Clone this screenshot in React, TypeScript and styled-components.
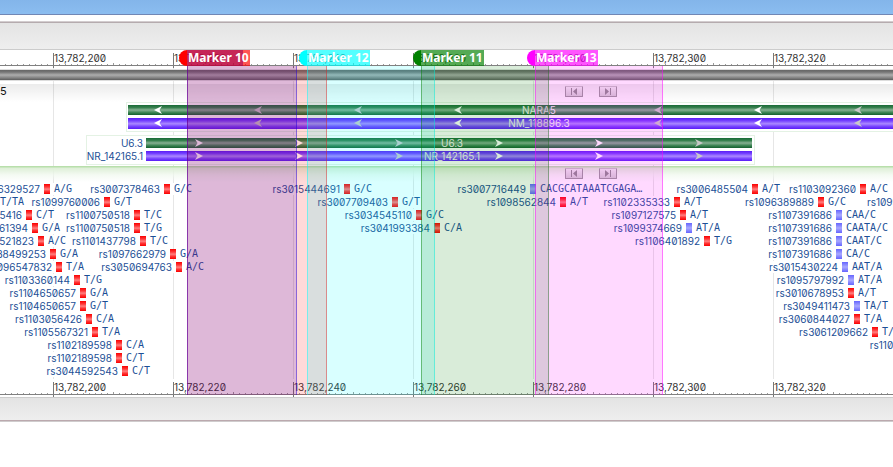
import React from "react";
import styled, { createGlobalStyle } from "styled-components";

const BASE_WIDTH = 6;
const FIRST_BASE = 200;
const ORIGIN = 50;

/** Left edge in pixels of a base, counted from 13,782,000. */
const baseLeft = (base: number) => ORIGIN + (base - FIRST_BASE) * BASE_WIDTH;

const GlobalStyle = createGlobalStyle`
  * { box-sizing: border-box; }
  body {
    margin: 0;
    background: #fff;
    overflow: hidden;
    font-family: Inter, "Noto Sans", sans-serif;
    font-size: 10px;
    font-feature-settings: "zero" 1;
  }
`;

const TitleBar = styled.header`
  height: 15px;
  margin-bottom: 6px;
  background: linear-gradient(#83b5ea, #8bbdf0);
  border-bottom: 1px solid #7187b5;
`;

const Panel = styled.main`
  border-top: 1px solid #d3cdcf;
  border-bottom: 1px solid #cfcccd;
`;

const Toolbar = styled.div`
  height: 28px;
  border-top: 1px solid #b5abae;
  border-bottom: 1px solid #ccc;
  background: linear-gradient(#e4e4e4, #eee);
`;

const StatusBar = styled.footer`
  height: 24px;
  border-top: 1px solid #ccc;
  border-bottom: 1px solid #bba9ae;
  background: linear-gradient(#e3e3e3, #eee);
`;

const Viewer = styled.section`
  position: relative;
  overflow: hidden;
`;

const Ruler = styled.div`
  display: flex;
  height: 18px;
  padding: 1px 0 0 53px;
  background:
    linear-gradient(#808080, #808080) 0 15px / 100% 1px no-repeat,
    linear-gradient(90deg, #777 1px, transparent 1px) 53px 3px / 120px 15px repeat-x,
    linear-gradient(90deg, #999 1px, transparent 1px) 53px 13px / 60px 2px repeat-x,
    linear-gradient(90deg, #999 1px, transparent 1px) 53px 14px / 6px 1px repeat-x,
    #fff;
`;

const RulerLabel = styled.span`
  flex: 0 0 120px;
  padding-left: 1px;
  line-height: 14px;
  color: #333;
  white-space: nowrap;
`;

const Tracks = styled.div`
  background: linear-gradient(90deg, #e6e6e6 1px, transparent 1px) 53px 0 / 120px 100% repeat-x;
`;

const SequenceTrack = styled.div`
  padding: 1px 0 3px;
`;

const SequenceBar = styled.div`
  height: 12px;
  border-top: 1px solid #ddd;
  border-bottom: 1px solid #ddd;
  background: linear-gradient(#666, #747474 20%, #adadad 50%, #808080 80%, #5c5c5c);
`;

const TrackHeader = styled.div<{ $kind: "gene" | "snp" }>`
  display: flex;
  align-items: flex-start;
  height: ${(p) => (p.$kind === "gene" ? 18 : 16)}px;
  padding-top: 2px;
  background: ${(p) =>
    p.$kind === "gene"
      ? "linear-gradient(rgba(0,0,0,.08), rgba(0,0,0,0))"
      : "linear-gradient(#b8dfab 1px, #deefd7 2px, rgba(240,248,238,.7) 9px, rgba(255,255,255,0))"};
`;

const TrackName = styled.span`
  flex: 0 0 565px;
  font-size: 11px;
  line-height: 10px;
  color: #111;
`;

const NavButtons = styled.div`
  display: flex;
  gap: 16px;
`;

const NavButton = styled.button`
  display: flex;
  align-items: center;
  justify-content: center;
  width: 18px;
  height: 11px;
  padding: 0;
  border: 1px solid #999;
  border-top-color: #c4c4c4;
  border-radius: 1px;
  background: linear-gradient(#eee, #d2d2d2);
`;

const GeneGroup = styled.div<{ $left: number; $width?: number; $gap: number }>`
  width: ${(p) => (p.$width ? `${p.$width}px` : "auto")};
  margin-left: ${(p) => p.$left}px;
  margin-bottom: ${(p) => p.$gap}px;
  padding: 2px 0 0 1px;
  border: 1px solid #e4f2e4;
  border-right-width: ${(p) => (p.$width ? 1 : 0)}px;
  background: #fff;
`;

const GeneRow = styled.div`
  display: flex;
  align-items: flex-start;
  height: 13px;
`;

const GeneName = styled.span`
  display: flex;
  justify-content: flex-end;
  width: 55px;
  margin-right: 3px;
  line-height: 10px;
  white-space: nowrap;
  color: #1c4f96;
`;

const GeneBar = styled.div<{ $kind: "gene" | "rna"; $open?: boolean }>`
  position: relative;
  flex: 1;
  height: ${(p) => (p.$kind === "rna" && p.$open ? 11 : 10)}px;
  margin-right: ${(p) => (p.$open ? 0 : 2)}px;
  overflow: hidden;
  background: ${(p) =>
    p.$kind === "gene"
      ? "linear-gradient(#186b36, #35804d 25%, #86b092 50%, #35804d 78%, #14602f)"
      : "linear-gradient(#5a1cf5, #7440ff 25%, #aa88ff 52%, #7440ff 78%, #5a1cf5)"};
`;

const BarText = styled.span<{ $center: number }>`
  position: absolute;
  top: 0;
  left: ${(p) => p.$center}px;
  line-height: 11px;
  transform: translateX(-50%);
  white-space: nowrap;
  color: #f2f2f2;
`;

const ArrowRow = styled.div<{ $start: number }>`
  display: flex;
  gap: 92px;
  padding: 1px 0 0 ${(p) => p.$start}px;
`;

const ArrowIcon = styled.svg<{ $tone: "bright" | "dim" | "none" }>`
  flex: 0 0 8px;
  height: 8px;
  fill: ${(p) => (p.$tone === "dim" ? "#c8c8c8" : "#fff")};
  visibility: ${(p) => (p.$tone === "none" ? "hidden" : "visible")};
`;

const SnpList = styled.ul`
  margin: 0;
  padding: 0 0 2px;
  list-style: none;
`;

const SnpRow = styled.li`
  position: relative;
  height: 13px;
`;

const Snp = styled.div<{ $base: number }>`
  position: absolute;
  left: ${(p) => baseLeft(p.$base)}px;
  display: flex;
  align-items: center;
  height: 13px;
  line-height: 12px;
  white-space: nowrap;
  color: #1c4f96;
`;

const SnpName = styled.span`
  position: absolute;
  right: 100%;
  padding-right: 4px;
  background: #fff;
`;

const SnpMark = styled.span<{ $indel: boolean }>`
  width: 6px;
  height: 10px;
  background: ${(p) =>
    p.$indel
      ? "linear-gradient(#6565ff, #a9a9ff 50%, #6565ff)"
      : "linear-gradient(#fa0000, #ff3838 30%, #ff8080 52%, #ff3030 75%, #fa0000)"};
`;

const Allele = styled.span`
  padding-left: 4px;
  background: #fff;
  font-family: "DejaVu Sans Mono", monospace;
`;

const MarkerRange = styled.div<{ $left: number; $width: number; $rgb: string }>`
  position: absolute;
  top: 16px;
  bottom: 2px;
  left: ${(p) => p.$left}px;
  width: ${(p) => p.$width}px;
  border: solid rgba(${(p) => p.$rgb}, 0.45);
  border-width: 0 1px;
  background: rgba(${(p) => p.$rgb}, 0.15);
  pointer-events: none;
`;

const MarkerFlag = styled.div<{ $left: number; $rgb: string; $shaded: boolean }>`
  position: absolute;
  top: 0;
  left: ${(p) => p.$left}px;
  width: 63px;
  height: 16px;
  padding-left: 1px;
  background:
    ${(p) => (p.$shaded ? "linear-gradient(rgba(150, 0, 90, .55), rgba(150, 0, 90, .55)) 0 0 / 56px 100% no-repeat," : "")}
    rgba(${(p) => p.$rgb}, 0.67);
  font: bold 12px/16px "Noto Sans", sans-serif;
  white-space: nowrap;
  color: #fff;

  &::before {
    content: "";
    position: absolute;
    top: 0;
    right: 100%;
    width: 8px;
    height: 16px;
    border-radius: 8px 0 0 8px;
    background: rgb(${(p) => p.$rgb});
  }
`;

type SnpData = [name: string, base: number, allele: string, indel?: boolean];

const SNP_ROWS: SnpData[][] = [
  [["rs1096329527", 199, "A/G"], ["rs3007378463", 219, "G/C"], ["rs3015444691", 249, "G/C"], ["rs3007716449", 280, "CACGCATAAATCGAGA…", true], ["rs3006485504", 317, "A/T"], ["rs1103092360", 335, "A/C"]],
  [["rs1098230741", 190, "T/TA", true], ["rs1099760006", 209, "G/T"], ["rs3007709403", 257, "G/T"], ["rs1098562844", 285, "A/T"], ["rs1102335333", 304, "A/T"], ["rs1096389889", 328, "G/C"], ["rs1099402318", 348, "C/T"]],
  [["rs1097305416", 196, "C/T"], ["rs1100750518", 214, "T/C"], ["rs3034545110", 261, "G/C"], ["rs1097127575", 305, "A/T"], ["rs1107391686", 331, "CAA/C", true]],
  [["rs3051761394", 197, "G/A"], ["rs1100750518", 214, "T/G"], ["rs3041993384", 264, "C/A"], ["rs1099374669", 306, "AT/A", true], ["rs1107391686", 331, "CAATA/C", true]],
  [["rs3018521823", 198, "A/C"], ["rs1101437798", 215, "T/C"], ["rs1106401892", 309, "T/G"], ["rs1107391686", 331, "CAAT/C", true]],
  [["rs3038499253", 200, "G/A"], ["rs1097662979", 220, "G/A"], ["rs1107391686", 331, "CA/C", true]],
  [["rs1096547832", 201, "T/A"], ["rs3050694763", 221, "A/C"], ["rs3015430224", 332, "AAT/A", true]],
  [["rs1103360144", 204, "T/G"], ["rs1095797992", 333, "AT/A", true]],
  [["rs1104650657", 205, "G/A"], ["rs3010678953", 333, "A/T"]],
  [["rs1104650657", 205, "G/T"], ["rs3049411473", 334, "TA/T", true]],
  [["rs1103056426", 206, "C/A"], ["rs3060844027", 334, "T/A"]],
  [["rs1105567321", 207, "T/A"], ["rs3061209662", 337, "T/A"]],
  [["rs1102189598", 211, "C/A"], ["rs1107214630", 348, "G/A"]],
  [["rs1102189598", 211, "C/T"]],
  [["rs3044592543", 212, "C/T"]],
];

const MARKERS = [
  { name: "Marker 10", left: 187, width: 140, rgb: "255, 0, 0", shaded: true },
  { name: "", left: 187, width: 110, rgb: "35, 0, 217" },
  { name: "Marker 12", left: 307, width: 128, rgb: "0, 255, 255" },
  { name: "Marker 11", left: 421, width: 128, rgb: "0, 128, 0" },
  { name: "Marker 13", left: 535, width: 128, rgb: "255, 0, 255" },
];

type Tone = "bright" | "dim" | "none";

const REVERSE_TONES: Tone[] = ["bright", "dim", "dim", "bright", "none", "dim", "bright", "dim"];
const FORWARD_TONES: Tone[] = ["bright", "bright", "dim", "bright", "bright", "dim"];

function Arrows({ start, tones, reverse = false }: { start: number; tones: Tone[]; reverse?: boolean }) {
  return (
    <ArrowRow $start={start}>
      {tones.map((tone, index) => (
        <ArrowIcon key={index} $tone={tone} viewBox="0 0 8 8" aria-hidden="true">
          <path d={reverse ? "M0 4 8 0 5.5 4 8 8z" : "M8 4 0 0 2.5 4 0 8z"} />
        </ArrowIcon>
      ))}
    </ArrowRow>
  );
}

function Navigation() {
  return (
    <NavButtons>
      <NavButton aria-label="Previous feature">
        <svg width="8" height="7" viewBox="0 0 8 7" fill="#8c8c8c">
          <path d="M1 0h1v7H1zM7 0v7L3 3.5z" />
        </svg>
      </NavButton>
      <NavButton aria-label="Next feature">
        <svg width="8" height="7" viewBox="0 0 8 7" fill="#8c8c8c">
          <path d="M6 0h1v7H6zM1 0v7l4-3.5z" />
        </svg>
      </NavButton>
    </NavButtons>
  );
}

function Scale() {
  return (
    <Ruler>
      {[200, 220, 240, 260, 280, 300, 320].map((base) => (
        <RulerLabel key={base}>{`13,782,${base}`}</RulerLabel>
      ))}
    </Ruler>
  );
}

export default function App() {
  return (
    <>
      <GlobalStyle />
      <TitleBar />
      <Panel>
        <Toolbar />
        <Viewer>
          <Scale />
          <Tracks>
            <SequenceTrack>
              <SequenceBar />
            </SequenceTrack>
            <TrackHeader $kind="gene">
              <TrackName>5</TrackName>
              <Navigation />
            </TrackHeader>
            <GeneGroup $left={126} $gap={3}>
              <GeneRow>
                <GeneBar $kind="gene" $open>
                  <Arrows start={26} tones={REVERSE_TONES} reverse />
                  <BarText $center={411}>NARA5</BarText>
                </GeneBar>
              </GeneRow>
              <GeneRow>
                <GeneBar $kind="rna" $open>
                  <Arrows start={26} tones={REVERSE_TONES} reverse />
                  <BarText $center={411}>NM_118896.3</BarText>
                </GeneBar>
              </GeneRow>
            </GeneGroup>
            <GeneGroup $left={86} $width={669} $gap={1}>
              <GeneRow>
                <GeneName>U6.3</GeneName>
                <GeneBar $kind="gene">
                  <Arrows start={49} tones={FORWARD_TONES} />
                  <BarText $center={306}>U6.3</BarText>
                </GeneBar>
              </GeneRow>
              <GeneRow>
                <GeneName>NR_142165.1</GeneName>
                <GeneBar $kind="rna">
                  <Arrows start={49} tones={FORWARD_TONES} />
                  <BarText $center={306}>NR_142165.1</BarText>
                </GeneBar>
              </GeneRow>
            </GeneGroup>
            <TrackHeader $kind="snp">
              <TrackName />
              <Navigation />
            </TrackHeader>
            <SnpList>
              {SNP_ROWS.map((row, index) => (
                <SnpRow key={index}>
                  {row.map(([name, base, allele, indel]) => (
                    <Snp key={base} $base={base}>
                      <SnpName>{name}</SnpName>
                      <SnpMark $indel={Boolean(indel)} />
                      <Allele>{allele}</Allele>
                    </Snp>
                  ))}
                </SnpRow>
              ))}
            </SnpList>
          </Tracks>
          <Scale />
          {MARKERS.map((m) => (
            <React.Fragment key={m.rgb}>
              <MarkerRange $left={m.left} $width={m.width} $rgb={m.rgb} />
              {m.name && (
                <MarkerFlag $left={m.left} $rgb={m.rgb} $shaded={Boolean(m.shaded)}>
                  {m.name}
                </MarkerFlag>
              )}
            </React.Fragment>
          ))}
        </Viewer>
        <StatusBar />
      </Panel>
    </>
  );
}
